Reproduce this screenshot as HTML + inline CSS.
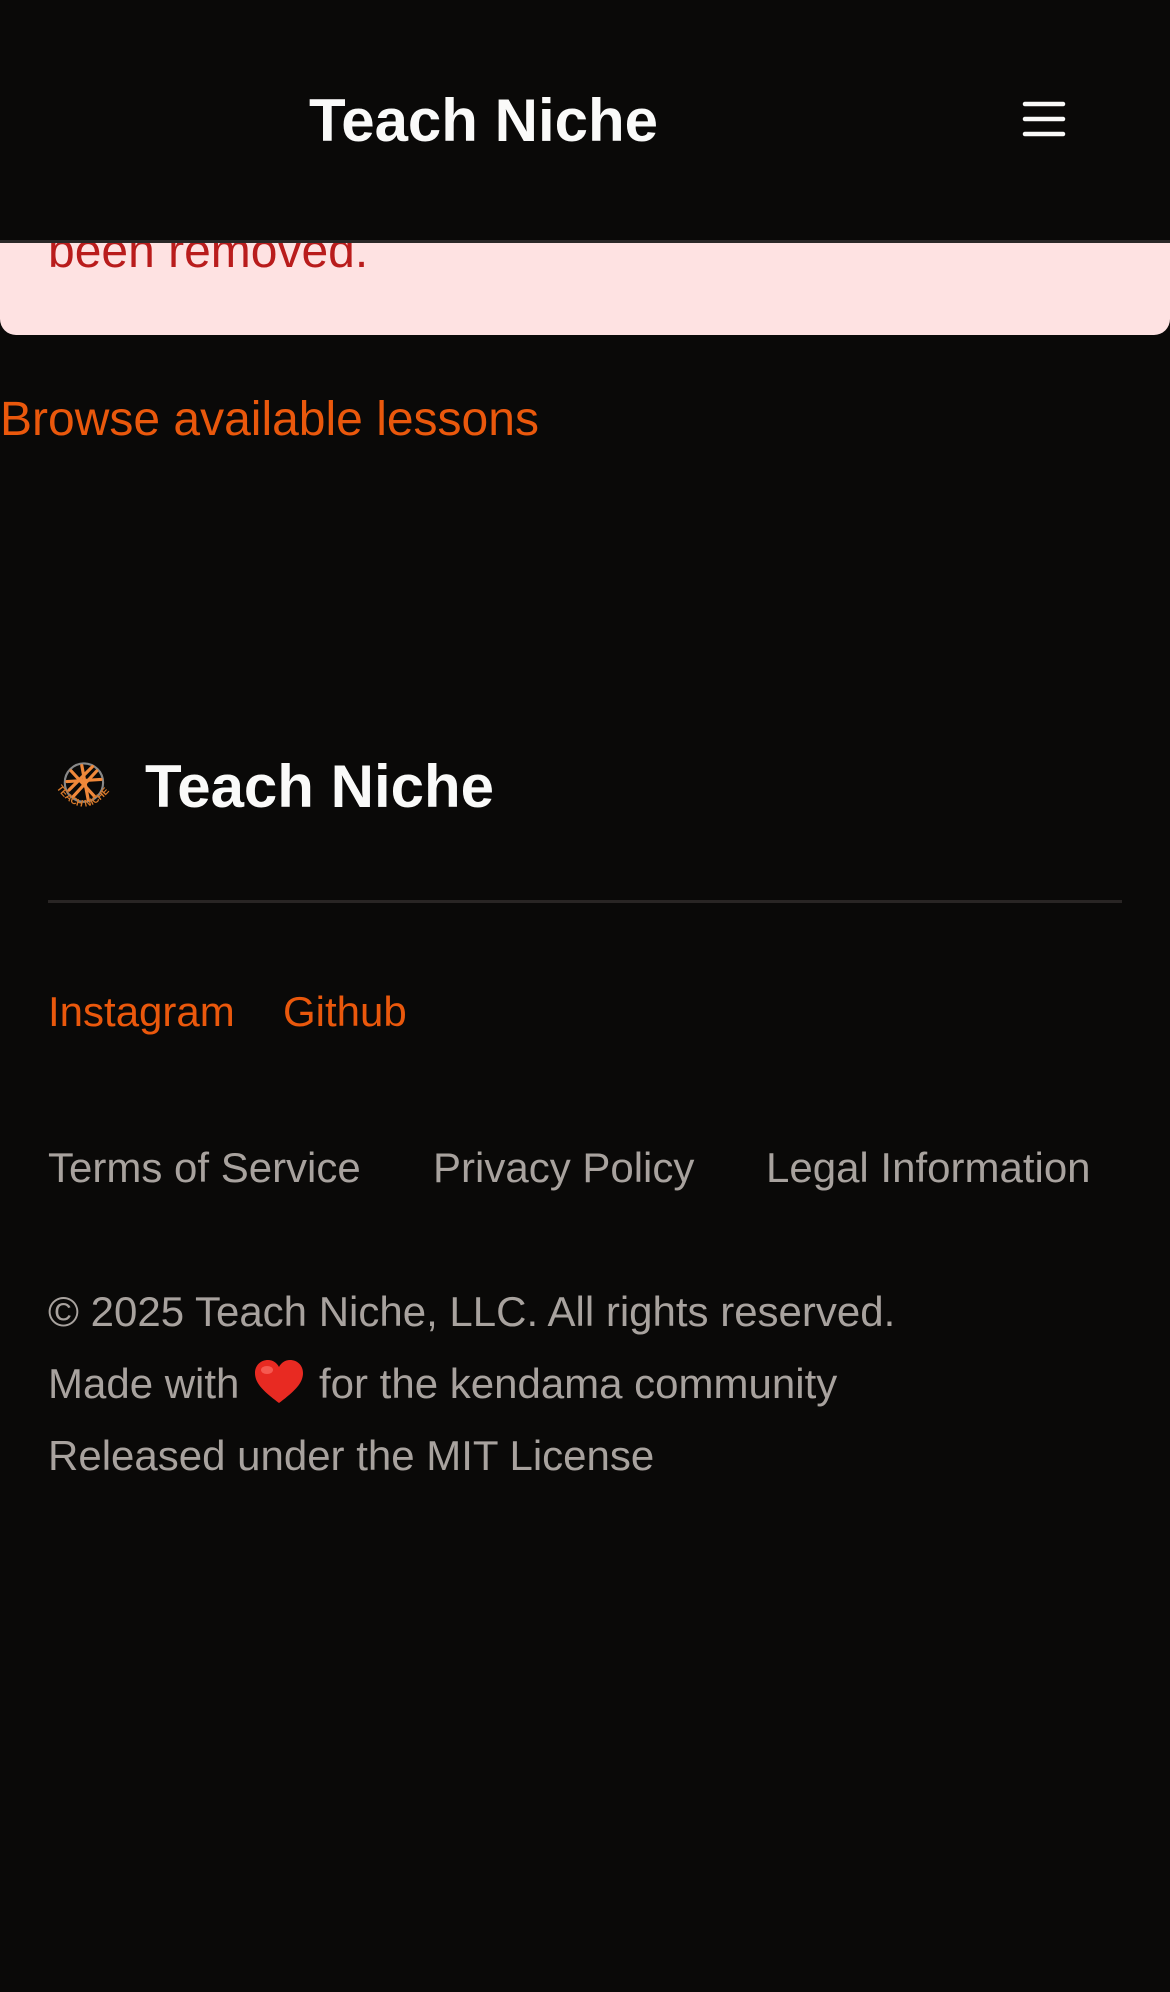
<!DOCTYPE html>
<html><head><meta charset="utf-8"><style>
html,body{margin:0;padding:0;background:#0a0908;width:1170px;height:1992px;overflow:hidden;position:relative;font-family:"Liberation Sans",Arial,sans-serif}
.a{position:absolute;line-height:1;white-space:nowrap}
.g{color:#a8a29e;font-size:42px}
.o{color:#ea580c}
</style></head><body>
<div style="position:absolute;left:0;top:0;width:1170px;height:335px;background:#fee2e2;border-radius:0 0 16px 16px"></div>
<div class="a" style="left:48px;top:228px;font-size:48px;color:#b91c1c">been removed.</div>
<div style="position:absolute;left:0;top:0;width:1170px;height:240px;background:#0a0908;border-bottom:3px solid #2a2827"></div>
<div class="a" style="left:309px;top:91px;font-size:60px;font-weight:bold;color:#fafaf9">Teach Niche</div>
<svg style="position:absolute;left:1021px;top:100px" width="46" height="38" viewBox="0 0 46 38"><g stroke="#fafaf9" stroke-width="4.5" stroke-linecap="round"><line x1="4" y1="4" x2="42" y2="4"/><line x1="4" y1="19" x2="42" y2="19"/><line x1="4" y1="34" x2="42" y2="34"/></g></svg>
<div class="a o" style="left:0;top:396px;font-size:48px">Browse available lessons</div>

<svg style="position:absolute;left:52px;top:758px" width="66" height="62" viewBox="0 0 62 58">
<circle cx="30" cy="23" r="18" fill="none" stroke="#888" stroke-width="2"/>
<g stroke="#f0883a" stroke-width="3" stroke-linecap="round">
<line x1="18" y1="12" x2="40" y2="36"/><line x1="42" y1="12" x2="20" y2="36"/><line x1="14" y1="22" x2="46" y2="20"/><line x1="28" y1="7" x2="34" y2="39"/><line x1="16" y1="30" x2="38" y2="8"/></g>
<path id="arc" d="M4 28 Q30 64 58 26" fill="none"/>
<text font-size="9" font-weight="bold" fill="#d97a2a" font-family="Liberation Sans,sans-serif"><textPath href="#arc">TEACH NICHE</textPath></text>
</svg>
<div class="a" style="left:145px;top:757px;font-size:60px;font-weight:bold;color:#fafaf9">Teach Niche</div>
<div style="position:absolute;left:48px;top:900px;width:1074px;height:3px;background:#292524"></div>
<div class="a o" style="left:48px;top:991px;font-size:42px">Instagram</div>
<div class="a o" style="left:283px;top:991px;font-size:42px">Github</div>
<div class="a g" style="left:48px;top:1147px">Terms of Service</div>
<div class="a g" style="left:433px;top:1147px">Privacy Policy</div>
<div class="a g" style="left:766px;top:1147px">Legal Information</div>
<div class="a g" style="left:48px;top:1291px">© 2025 Teach Niche, LLC. All rights reserved.</div>
<div class="a g" style="left:48px;top:1363px">Made with</div>
<svg style="position:absolute;left:253px;top:1359px" width="52" height="46" viewBox="0 0 52 46"><path d="M26 44 C10 32 2 24 2 14 C2 6 8 1 15 1 C20 1 24 4 26 8 C28 4 32 1 37 1 C44 1 50 6 50 14 C50 24 42 32 26 44Z" fill="#e82a22"/><ellipse cx="14" cy="11" rx="6" ry="4" fill="#ff7a70" opacity=".6"/></svg>
<div class="a g" style="left:319px;top:1363px">for the kendama community</div>
<div class="a g" style="left:48px;top:1435px">Released under the MIT License</div>
</body></html>
